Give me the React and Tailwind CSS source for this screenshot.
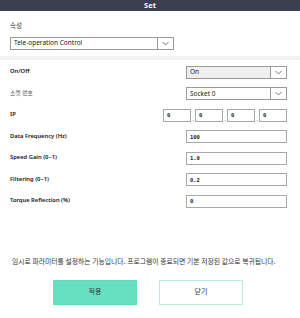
import React from "react";

const sans = { fontFamily: '"Noto Sans", "Noto Sans CJK KR", sans-serif' };

const Chevron = () => (
  <svg width="7" height="5" viewBox="0 0 7 5" fill="none">
    <path d="M0.5 1 L3.5 4 L6.5 1" stroke="#555" strokeWidth="0.8" />
  </svg>
);

const Select = ({ value, gray, width = "w-[101px]" }) => (
  <div
    className={`flex items-stretch h-[13px] border border-[#9a9a9a] ${width} ${
      gray ? "bg-[#efefef]" : "bg-white"
    }`}
  >
    <span className="flex-1 flex items-center pl-[3px] text-[6.5px] text-[#222] leading-none">
      {value}
    </span>
    <span className="w-[16px] flex items-center justify-center border-l border-[#9a9a9a] bg-white">
      <Chevron />
    </span>
  </div>
);

const Input = ({ value, width = "w-[101px]" }) => (
  <div
    className={`h-[13px] border border-[#a8a8a8] bg-white flex items-center pl-[3px] text-[5.5px] font-bold text-[#222] ${width}`}
    style={{ fontFamily: '"DejaVu Sans Mono", monospace' }}
  >
    {value}
  </div>
);

const Row = ({ label, light, children }) => (
  <div className="flex items-center justify-between h-[21.5px] pl-[10px] pr-[13px]">
    <span
      className={`text-[5.8px] leading-none ${
        light ? "text-[#555] font-normal" : "text-[#111] font-semibold"
      }`}
    >
      {label}
    </span>
    {children}
  </div>
);

const App = () => {
  return (
    <div className="w-[300px] h-[318px] bg-white flex flex-col" style={sans}>
      {/* title bar */}
      <div className="h-[11px] bg-[#3b3f4d] flex items-center justify-center">
        <span className="text-white text-[7.5px] font-bold leading-none">Set</span>
      </div>

      {/* 속성 */}
      <div className="px-[10px] pt-[12px]">
        <div className="text-[6.5px] text-[#333] leading-none mb-[7px]">속성</div>
        <Select value="Tele-operation Control" width="w-[164px]" />
      </div>

      <div className="mt-[6px] h-[4px] bg-[#f2f2f2]" />

      {/* parameters */}
      <div className="pt-[2px]">
        <Row label="On/Off">
          <Select value="On" gray />
        </Row>
        <Row label="소켓 번호" light>
          <Select value="Socket 0" />
        </Row>
        <Row label="IP">
          <div className="flex items-end">
            <Input value="0" width="w-[28px]" />
            <span className="w-[4px] text-center text-[6px] leading-none text-[#666]">.</span>
            <Input value="0" width="w-[28px]" />
            <span className="w-[4px] text-center text-[6px] leading-none text-[#666]">.</span>
            <Input value="0" width="w-[28px]" />
            <span className="w-[4px] text-center text-[6px] leading-none text-[#666]">.</span>
            <Input value="0" width="w-[28px]" />
          </div>
        </Row>
        <Row label="Data Frequency (Hz)">
          <Input value="100" />
        </Row>
        <Row label="Speed Gain (0~1)">
          <Input value="1.0" />
        </Row>
        <Row label="Filtering (0~1)">
          <Input value="0.2" />
        </Row>
        <Row label="Torque Reflection (%)">
          <Input value="0" />
        </Row>
      </div>

      {/* notice */}
      <div className="mt-auto px-[12px] text-[6.8px] text-[#333] leading-none whitespace-nowrap">
        임시로 파라미터를 설정하는 기능입니다. 프로그램이 종료되면 기본 저장된 값으로 복귀됩니다.
      </div>

      {/* buttons */}
      <div className="flex justify-center gap-[22px] mt-[14px] mb-[13px] pr-[4px]">
        <button className="w-[84px] h-[25px] bg-[#66e0c1] border border-[#5fdcbc] text-[7px] text-[#333]">
          적용
        </button>
        <button className="w-[84px] h-[25px] bg-white border border-[#b9eedf] text-[7px] text-[#333]">
          닫기
        </button>
      </div>
    </div>
  );
};

export default App;
